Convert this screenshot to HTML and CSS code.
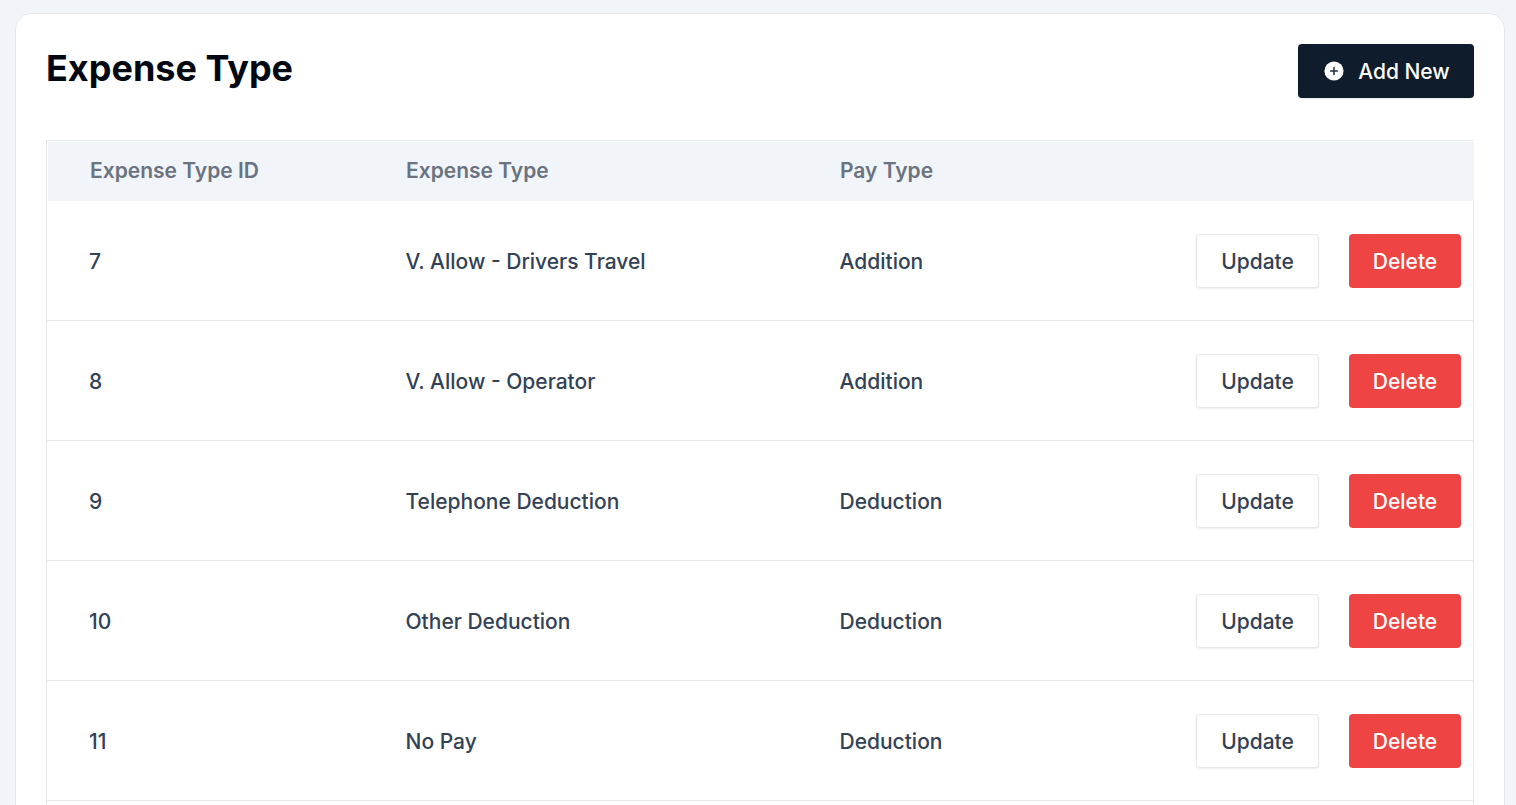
FILE: index.html
```html
<!DOCTYPE html>
<html lang="en">
<head>
<meta charset="utf-8">
<title>Expense Type</title>
<link rel="stylesheet" href="styles.css">
</head>
<body>
<main class="card">
  <header class="card-head">
    <h1 class="title">Expense Type</h1>
    <button class="btn btn-add" type="button">
      <svg class="add-icon" viewBox="0 0 20 20" width="20" height="20" aria-hidden="true">
        <circle cx="10" cy="10" r="9.6" fill="#fff"/>
        <path d="M10 6.6v6.8M6.6 10h6.8" stroke="#1f2f3f" stroke-width="1.5" stroke-linecap="round" fill="none"/>
      </svg>
      <span class="btn-label">Add New</span>
    </button>
  </header>
  <div class="table-wrap">
    <table class="table">
      <colgroup>
        <col class="col-id"><col class="col-type"><col class="col-pay"><col>
      </colgroup>
      <thead>
        <tr><th>Expense Type ID</th><th>Expense Type</th><th>Pay Type</th><th></th></tr>
      </thead>
      <tbody>
        <tr><td>7</td><td>V. Allow - Drivers Travel</td><td>Addition</td>
          <td><div class="actions"><button class="btn btn-update" type="button">Update</button><button class="btn btn-delete" type="button">Delete</button></div></td></tr>
        <tr><td>8</td><td>V. Allow - Operator</td><td>Addition</td>
          <td><div class="actions"><button class="btn btn-update" type="button">Update</button><button class="btn btn-delete" type="button">Delete</button></div></td></tr>
        <tr><td>9</td><td>Telephone Deduction</td><td>Deduction</td>
          <td><div class="actions"><button class="btn btn-update" type="button">Update</button><button class="btn btn-delete" type="button">Delete</button></div></td></tr>
        <tr><td>10</td><td>Other Deduction</td><td>Deduction</td>
          <td><div class="actions"><button class="btn btn-update" type="button">Update</button><button class="btn btn-delete" type="button">Delete</button></div></td></tr>
        <tr><td>11</td><td>No Pay</td><td>Deduction</td>
          <td><div class="actions"><button class="btn btn-update" type="button">Update</button><button class="btn btn-delete" type="button">Delete</button></div></td></tr>
      </tbody>
    </table>
  </div>
</main>
</body>
</html>
```
FILE: styles.css
```css
* { box-sizing: border-box; }
html, body { height: 100%; overflow: hidden; }
body {
  margin: 0;
  padding: 13px 11px 0 15px;
  background: #f1f5f9;
  font-family: Inter, "Liberation Sans", sans-serif;
  color: #334155;
}
.card {
  background: #fff;
  border: 1px solid #e5e7eb;
  border-radius: 16px;
  padding: 30px 30px 0;
  min-height: 900px;
}
.card-head {
  display: flex;
  justify-content: space-between;
  align-items: flex-start;
  height: 96px;
}
.title {
  margin: 0;
  font-size: 36px;
  line-height: 48px;
  font-weight: 700;
  color: #030712;
}
.btn {
  font-family: inherit;
  font-size: 21px;
  line-height: 28px;
  font-weight: 500;
  height: 54px;
  padding: 2px 0 0;
  border-radius: 4px;
  cursor: pointer;
}
.btn-add {
  display: flex;
  align-items: center;
  gap: 14px;
  width: 176px;
  justify-content: center;
  padding: 0 0 0 2px;
  background: #0f1c2b;
  color: #fff;
  border: 0;
  box-shadow: 0 1px 2px rgba(0,0,0,.1);
}
.btn-label { padding-top: 2px; }
.add-icon { display: block; }
.table-wrap {
  border-left: 1px solid #e5e7eb;
  border-right: 1px solid #e5e7eb;
  border-top: 1px solid #e5e7eb;
  min-height: 760px;
}
.table {
  width: calc(100% + 1px);
  border-collapse: separate;
  border-spacing: 0;
  table-layout: fixed;
}
.col-id { width: 358px; }
.col-type { width: 434px; }
.col-pay { width: 288px; }
.table th {
  height: 60px;
  padding: 0 0 2px 43px;
  border-top: 1px solid #fff;
  background: #f1f5f9;
  text-align: left;
  font-size: 21px;
  font-weight: 600;
  color: #6b7280;
}
.table th:first-child { border-left: 1px solid #fff; padding-left: 42px; }
.table td {
  height: 120px;
  padding: 1px 0 0 42px;
  border-bottom: 1px solid #e5e7eb;
  font-size: 21px;
  font-weight: 500;
}
.table th + th { padding-left: 1px; }
.table td + td { padding-left: 0.5px; }
.table td:last-child { padding-top: 0; }
.actions {
  display: flex;
  justify-content: flex-end;
  gap: 30px;
  padding-right: 13px;
}
.btn-update {
  width: 123px;
  background: #fff;
  color: #334155;
  border: 1px solid #e5e7eb;
  box-shadow: 0 1px 2px rgba(0,0,0,.08);
}
.btn-delete {
  width: 112px;
  background: #ef4444;
  color: #fff;
  border: 0;
}
```
